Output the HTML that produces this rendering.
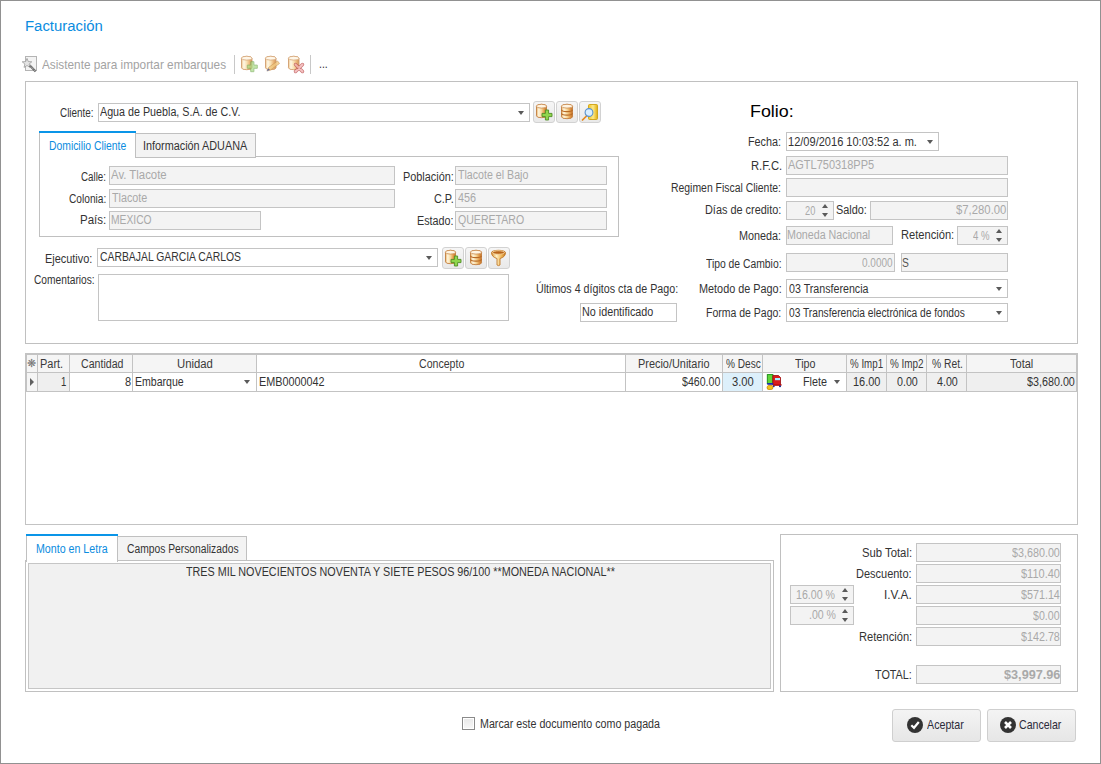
<!DOCTYPE html><html><head><meta charset='utf-8'><style>
*{margin:0;padding:0;box-sizing:border-box}
html,body{width:1101px;height:764px;overflow:hidden;background:#fff}
body{position:relative;font-family:"Liberation Sans",sans-serif;color:#000}
.a{position:absolute}
.t{position:absolute;white-space:nowrap;font-family:"Liberation Sans",sans-serif}

</style></head><body>
<div class='a' style='left:0;top:0;width:1101px;height:764px;border:1px solid #919191'></div>
<div class='t' style='left:25.04px;transform-origin:0 0;top:18px;font-size:15.5px;line-height:15.5px;color:#0b8ce0;font-weight:normal;transform:scaleX(0.9620);'>Facturación</div>
<svg class='a' style='left:22px;top:56px;overflow:visible' width='16' height='16' viewBox='0 0 16 16'>
<rect x='3.5' y='0.5' width='11' height='14' fill='#f3f3f3' stroke='#b4b4b4'/>
<path d='M5,2.4 L6.3,5.6 L9.8,5.8 L7.1,8 L8,11.4 L5,9.5 L2,11.4 L2.9,8 L0.2,5.8 L3.7,5.6Z' fill='#e4e4e4' stroke='#9c9c9c' stroke-width='.8'/>
<path d='M7.6,9.2 L13.6,15.4' stroke='#6a6a6a' stroke-width='2.2'/>
<path d='M7.6,9.2 L13.6,15.4' stroke='#d8d8d8' stroke-width='1' stroke-dasharray='1 1.2'/></svg>
<div class='t' style='left:42.30px;transform-origin:0 0;top:58px;font-size:13px;line-height:13px;color:#a3a3a3;font-weight:normal;transform:scaleX(0.9064);'>Asistente para importar embarques</div>
<div class='a' style='left:234px;top:55px;width:1px;height:19px;background:#c8c8c8;'></div>
<svg class='a' style='left:240px;top:55px;overflow:visible' width='20' height='20' viewBox='0 0 20 20'><defs><linearGradient id='c1' x1='0' x2='1'><stop offset='0' stop-color='#e9b46a'/><stop offset='.22' stop-color='#fff6de'/><stop offset='.5' stop-color='#f7d79a'/><stop offset='.78' stop-color='#e39a48'/><stop offset='1' stop-color='#c0722a'/></linearGradient></defs><g opacity='0.75'><path d='M1.5,3.1999999999999997 A5.25,1.9 0 0 1 12.0,3.1999999999999997 V12.799999999999999 A5.25,1.9 0 0 1 1.5,12.799999999999999 Z' fill='url(#c1)' stroke='#c27e40' stroke-width='.9'/><ellipse cx='6.75' cy='3.1999999999999997' rx='5.25' ry='1.9' fill='#fff5e2' stroke='#c88a50' stroke-width='.8'/></g><path opacity='0.7' d='M10.700000000000001,6.699999999999999 h3.2 v3.4 h3.4 v3.2 h-3.4 v3.4 h-3.2 v-3.4 h-3.4 v-3.2 h3.4 z' fill='#a9dc86' stroke='#79ad5a' stroke-width='.9'/></svg>
<svg class='a' style='left:263px;top:55px;overflow:visible' width='20' height='20' viewBox='0 0 20 20'><defs><linearGradient id='c2' x1='0' x2='1'><stop offset='0' stop-color='#e9b46a'/><stop offset='.22' stop-color='#fff6de'/><stop offset='.5' stop-color='#f7d79a'/><stop offset='.78' stop-color='#e39a48'/><stop offset='1' stop-color='#c0722a'/></linearGradient></defs><g opacity='0.75'><path d='M2.5,3.1999999999999997 A5.25,1.9 0 0 1 13.0,3.1999999999999997 V12.799999999999999 A5.25,1.9 0 0 1 2.5,12.799999999999999 Z' fill='url(#c2)' stroke='#c27e40' stroke-width='.9'/><ellipse cx='7.75' cy='3.1999999999999997' rx='5.25' ry='1.9' fill='#fff5e2' stroke='#c88a50' stroke-width='.8'/></g><g opacity='.8'><path d='M4,16 L5.5,12.5 L14.5,6 L16.5,8.5 L7.5,15 Z' fill='#f2c981' stroke='#cc9955' stroke-width='.8'/><path d='M3.6,16.3 L5.3,13.2 L7,15 Z' fill='#4a5a9a'/></g></svg>
<svg class='a' style='left:287px;top:55px;overflow:visible' width='20' height='20' viewBox='0 0 20 20'><defs><linearGradient id='c3' x1='0' x2='1'><stop offset='0' stop-color='#e9b46a'/><stop offset='.22' stop-color='#fff6de'/><stop offset='.5' stop-color='#f7d79a'/><stop offset='.78' stop-color='#e39a48'/><stop offset='1' stop-color='#c0722a'/></linearGradient></defs><g opacity='0.75'><path d='M1.5,3.1999999999999997 A5.25,1.9 0 0 1 12.0,3.1999999999999997 V12.799999999999999 A5.25,1.9 0 0 1 1.5,12.799999999999999 Z' fill='url(#c3)' stroke='#c27e40' stroke-width='.9'/><ellipse cx='6.75' cy='3.1999999999999997' rx='5.25' ry='1.9' fill='#fff5e2' stroke='#c88a50' stroke-width='.8'/></g><g opacity='.8'><path d='M8.5,9.5 L15.5,16.5 M15.5,9.5 L8.5,16.5' stroke='#c05a5a' stroke-width='3.4' stroke-linecap='round'/><path d='M8.5,9.5 L15.5,16.5 M15.5,9.5 L8.5,16.5' stroke='#f3b5b5' stroke-width='1.8' stroke-linecap='round'/></g></svg>
<div class='a' style='left:310px;top:55px;width:1px;height:19px;background:#c8c8c8;'></div>
<div class='t' style='left:319.12px;transform-origin:0 0;top:58px;font-size:12px;line-height:12px;color:#333;font-weight:normal;transform:scaleX(0.8750);'>...</div>
<div class='a' style='left:25px;top:81px;width:1053px;height:263px;border:1px solid #c0c0c0;background:transparent;'></div>
<div class='t' style='left:60.00px;transform-origin:0 0;top:107px;font-size:12px;line-height:12px;color:#333;font-weight:normal;transform:scaleX(0.8250);'>Cliente:</div>
<div class='a' style='left:98px;top:103px;width:432px;height:19px;border:1px solid #c4c4c4;background:#fff;'></div>
<div class='t' style='left:100.00px;transform-origin:0 0;top:106px;font-size:12px;line-height:12px;color:#333;font-weight:normal;transform:scaleX(0.8942);'>Agua de Puebla, S.A. de C.V.</div>
<div class='a' style='left:518px;top:111px;width:0;height:0;border-left:3.5px solid transparent;border-right:3.5px solid transparent;border-top:4px solid #5a5a5a'></div>
<div class='a' style='left:533px;top:101px;width:22px;height:22px;border:1px solid #d2d2d2;border-radius:3px;background:linear-gradient(#f6f6f6,#e9e9e9)'></div>
<div class='a' style='left:556px;top:101px;width:22px;height:22px;border:1px solid #d2d2d2;border-radius:3px;background:linear-gradient(#f6f6f6,#e9e9e9)'></div>
<div class='a' style='left:579px;top:101px;width:22px;height:22px;border:1px solid #d2d2d2;border-radius:3px;background:linear-gradient(#f6f6f6,#e9e9e9)'></div>
<svg class='a' style='left:533px;top:101px;overflow:visible' width='22' height='22' viewBox='0 0 22 22'><defs><linearGradient id='c4' x1='0' x2='1'><stop offset='0' stop-color='#e9b46a'/><stop offset='.22' stop-color='#fff6de'/><stop offset='.5' stop-color='#f7d79a'/><stop offset='.78' stop-color='#e39a48'/><stop offset='1' stop-color='#c0722a'/></linearGradient></defs><g opacity='1.0'><path d='M3.5,5.2 A5.0,1.9 0 0 1 13.5,5.2 V14.799999999999999 A5.0,1.9 0 0 1 3.5,14.799999999999999 Z' fill='url(#c4)' stroke='#c27e40' stroke-width='.9'/><ellipse cx='8.5' cy='5.2' rx='5.0' ry='1.9' fill='#fff5e2' stroke='#c88a50' stroke-width='.8'/></g><path opacity='1.0' d='M12.4,9 h3.2 v3.4 h3.4 v3.2 h-3.4 v3.4 h-3.2 v-3.4 h-3.4 v-3.2 h3.4 z' fill='#8fd64c' stroke='#4f8d25' stroke-width='.9'/></svg>
<svg class='a' style='left:556px;top:101px;overflow:visible' width='22' height='22' viewBox='0 0 22 22'><defs><linearGradient id='c5' x1='0' x2='1'><stop offset='0' stop-color='#e9b46a'/><stop offset='.22' stop-color='#fff6de'/><stop offset='.5' stop-color='#f7d79a'/><stop offset='.78' stop-color='#e39a48'/><stop offset='1' stop-color='#c0722a'/></linearGradient></defs><g opacity='1.0'><path d='M5.5,5.2 A5.5,1.9 0 0 1 16.5,5.2 V15.8 A5.5,1.9 0 0 1 5.5,15.8 Z' fill='url(#c5)' stroke='#c27e40' stroke-width='.9'/><path d='M5.5,8.733333333333334 A5.5,1.9 0 0 0 16.5,8.733333333333334' fill='none' stroke='#b86a26' stroke-width='1.1'/><path d='M5.5,12.266666666666667 A5.5,1.9 0 0 0 16.5,12.266666666666667' fill='none' stroke='#b86a26' stroke-width='1.1'/><ellipse cx='11.0' cy='5.2' rx='5.5' ry='1.9' fill='#fff5e2' stroke='#c88a50' stroke-width='.8'/></g></svg>
<svg class='a' style='left:579px;top:101px;overflow:visible' width='22' height='22' viewBox='0 0 22 22'><defs><linearGradient id='yd' x1='0' x2='1'><stop offset='0' stop-color='#f1c21e'/><stop offset='.5' stop-color='#fde98a'/><stop offset='1' stop-color='#e0ae10'/></linearGradient></defs><rect x='9.5' y='3.5' width='9' height='15' rx='1' fill='url(#yd)' stroke='#cfa010' stroke-width='.9'/><path d='M8 14.5 L3.5 19' stroke='#e58a1e' stroke-width='1.7' stroke-linecap='round'/><circle cx='10' cy='11.5' r='3.9' fill='#d8eeff' stroke='#5a92cc' stroke-width='1.1'/></svg>
<div class='a' style='left:39px;top:156px;width:580px;height:81px;border:1px solid #c0c0c0;background:#fff;'></div>
<div class='a' style='left:39px;top:131px;width:97px;height:27px;background:#fff;border-left:1px solid #c0c0c0;border-right:1px solid #c0c0c0'></div>
<div class='a' style='left:39px;top:131px;width:97px;height:2px;background:#0a95e8;'></div>
<div class='a' style='left:135px;top:133px;width:121px;height:25px;border:1px solid #c0c0c0;background:#f3f3f3;'></div>
<div class='a' style='left:40px;top:156px;width:95px;height:2px;background:#fff'></div>
<div class='t' style='left:49.14px;transform-origin:0 0;top:140px;font-size:12px;line-height:12px;color:#0b8ce0;font-weight:normal;transform:scaleX(0.8636);'>Domicilio Cliente</div>
<div class='t' style='left:143.10px;transform-origin:0 0;top:140px;font-size:12px;line-height:12px;color:#333;font-weight:normal;transform:scaleX(0.9035);'>Información ADUANA</div>
<div class='t' style='left:80.60px;transform-origin:0 0;top:171px;font-size:12px;line-height:12px;color:#333;font-weight:normal;transform:scaleX(0.8133);'>Calle:</div>
<div class='a' style='left:109px;top:166px;width:286px;height:19px;border:1px solid #c4c4c4;background:#f3f3f3;'></div>
<div class='t' style='left:111.00px;transform-origin:0 0;top:169px;font-size:12px;line-height:12px;color:#a9a9a9;font-weight:normal;transform:scaleX(0.9483);'>Av. Tlacote</div>
<div class='t' style='left:68.60px;transform-origin:0 0;top:193px;font-size:12px;line-height:12px;color:#333;font-weight:normal;transform:scaleX(0.8465);'>Colonia:</div>
<div class='a' style='left:109px;top:189px;width:286px;height:19px;border:1px solid #c4c4c4;background:#f3f3f3;'></div>
<div class='t' style='left:112.00px;transform-origin:0 0;top:192px;font-size:12px;line-height:12px;color:#a9a9a9;font-weight:normal;transform:scaleX(0.8974);'>Tlacote</div>
<div class='t' style='left:79.54px;transform-origin:0 0;top:214px;font-size:12px;line-height:12px;color:#333;font-weight:normal;transform:scaleX(0.9600);'>País:</div>
<div class='a' style='left:109px;top:211px;width:152px;height:19px;border:1px solid #c4c4c4;background:#f3f3f3;'></div>
<div class='t' style='left:111.14px;transform-origin:0 0;top:214px;font-size:12px;line-height:12px;color:#a9a9a9;font-weight:normal;transform:scaleX(0.8565);'>MEXICO</div>
<div class='t' style='left:403.09px;transform-origin:0 0;top:171px;font-size:12px;line-height:12px;color:#333;font-weight:normal;transform:scaleX(0.9074);'>Población:</div>
<div class='a' style='left:455px;top:166px;width:152px;height:19px;border:1px solid #c4c4c4;background:#f3f3f3;'></div>
<div class='t' style='left:458.00px;transform-origin:0 0;top:169px;font-size:12px;line-height:12px;color:#a9a9a9;font-weight:normal;transform:scaleX(0.8861);'>Tlacote el Bajo</div>
<div class='t' style='left:434.00px;transform-origin:0 0;top:193px;font-size:12px;line-height:12px;color:#333;font-weight:normal;transform:scaleX(0.9048);'>C.P.</div>
<div class='a' style='left:455px;top:189px;width:152px;height:19px;border:1px solid #c4c4c4;background:#f3f3f3;'></div>
<div class='t' style='left:458.00px;transform-origin:0 0;top:192px;font-size:12px;line-height:12px;color:#a9a9a9;font-weight:normal;transform:scaleX(0.9000);'>456</div>
<div class='t' style='left:417.10px;transform-origin:0 0;top:215px;font-size:12px;line-height:12px;color:#333;font-weight:normal;transform:scaleX(0.8974);'>Estado:</div>
<div class='a' style='left:455px;top:211px;width:152px;height:19px;border:1px solid #c4c4c4;background:#f3f3f3;'></div>
<div class='t' style='left:458.00px;transform-origin:0 0;top:214px;font-size:12px;line-height:12px;color:#a9a9a9;font-weight:normal;transform:scaleX(0.8800);'>QUERETARO</div>
<div class='t' style='left:44.89px;transform-origin:0 0;top:253px;font-size:12px;line-height:12px;color:#333;font-weight:normal;transform:scaleX(0.9100);'>Ejecutivo:</div>
<div class='a' style='left:97px;top:248px;width:341px;height:19px;border:1px solid #c4c4c4;background:#fff;'></div>
<div class='t' style='left:100.00px;transform-origin:0 0;top:251px;font-size:12px;line-height:12px;color:#333;font-weight:normal;transform:scaleX(0.8650);'>CARBAJAL GARCIA CARLOS</div>
<div class='a' style='left:426px;top:256px;width:0;height:0;border-left:3.5px solid transparent;border-right:3.5px solid transparent;border-top:4px solid #5a5a5a'></div>
<div class='a' style='left:442px;top:247px;width:22px;height:22px;border:1px solid #d2d2d2;border-radius:3px;background:linear-gradient(#f6f6f6,#e9e9e9)'></div>
<div class='a' style='left:465px;top:247px;width:22px;height:22px;border:1px solid #d2d2d2;border-radius:3px;background:linear-gradient(#f6f6f6,#e9e9e9)'></div>
<div class='a' style='left:488px;top:247px;width:22px;height:22px;border:1px solid #d2d2d2;border-radius:3px;background:linear-gradient(#f6f6f6,#e9e9e9)'></div>
<svg class='a' style='left:442px;top:247px;overflow:visible' width='22' height='22' viewBox='0 0 22 22'><defs><linearGradient id='c6' x1='0' x2='1'><stop offset='0' stop-color='#e9b46a'/><stop offset='.22' stop-color='#fff6de'/><stop offset='.5' stop-color='#f7d79a'/><stop offset='.78' stop-color='#e39a48'/><stop offset='1' stop-color='#c0722a'/></linearGradient></defs><g opacity='1.0'><path d='M3.5,5.2 A5.0,1.9 0 0 1 13.5,5.2 V14.799999999999999 A5.0,1.9 0 0 1 3.5,14.799999999999999 Z' fill='url(#c6)' stroke='#c27e40' stroke-width='.9'/><ellipse cx='8.5' cy='5.2' rx='5.0' ry='1.9' fill='#fff5e2' stroke='#c88a50' stroke-width='.8'/></g><path opacity='1.0' d='M12.4,9 h3.2 v3.4 h3.4 v3.2 h-3.4 v3.4 h-3.2 v-3.4 h-3.4 v-3.2 h3.4 z' fill='#8fd64c' stroke='#4f8d25' stroke-width='.9'/></svg>
<svg class='a' style='left:465px;top:247px;overflow:visible' width='22' height='22' viewBox='0 0 22 22'><defs><linearGradient id='c7' x1='0' x2='1'><stop offset='0' stop-color='#e9b46a'/><stop offset='.22' stop-color='#fff6de'/><stop offset='.5' stop-color='#f7d79a'/><stop offset='.78' stop-color='#e39a48'/><stop offset='1' stop-color='#c0722a'/></linearGradient></defs><g opacity='1.0'><path d='M5.5,5.2 A5.5,1.9 0 0 1 16.5,5.2 V15.8 A5.5,1.9 0 0 1 5.5,15.8 Z' fill='url(#c7)' stroke='#c27e40' stroke-width='.9'/><path d='M5.5,8.733333333333334 A5.5,1.9 0 0 0 16.5,8.733333333333334' fill='none' stroke='#b86a26' stroke-width='1.1'/><path d='M5.5,12.266666666666667 A5.5,1.9 0 0 0 16.5,12.266666666666667' fill='none' stroke='#b86a26' stroke-width='1.1'/><ellipse cx='11.0' cy='5.2' rx='5.5' ry='1.9' fill='#fff5e2' stroke='#c88a50' stroke-width='.8'/></g></svg>
<svg class='a' style='left:488px;top:247px;overflow:visible' width='22' height='22' viewBox='0 0 22 22'><defs><linearGradient id='fn' x1='0' x2='1'><stop offset='0' stop-color='#d9902e'/><stop offset='.35' stop-color='#fff2c8'/><stop offset='.7' stop-color='#f0b85a'/><stop offset='1' stop-color='#c47420'/></linearGradient></defs><path d='M3.5,5.5 A7,2.2 0 0 1 17.5,5.5 Q17.5,10 12,11.5 V18 Q10.5,19.2 9,18 V11.5 Q3.5,10 3.5,5.5 Z' fill='url(#fn)' stroke='#c0782a' stroke-width='.9'/><ellipse cx='10.5' cy='5.5' rx='6' ry='1.7' fill='#b8641a' stroke='#ffe6b8' stroke-width='.7'/></svg>
<div class='t' style='left:33.50px;transform-origin:0 0;top:274px;font-size:12px;line-height:12px;color:#333;font-weight:normal;transform:scaleX(0.8500);'>Comentarios:</div>
<div class='a' style='left:98px;top:274px;width:411px;height:47px;border:1px solid #c4c4c4;background:#fff;'></div>
<div class='t' style='left:536.11px;transform-origin:0 0;top:283px;font-size:12px;line-height:12px;color:#333;font-weight:normal;transform:scaleX(0.8917);'>Últimos 4 dígitos cta de Pago:</div>
<div class='a' style='left:580px;top:303px;width:97px;height:19px;border:1px solid #c4c4c4;background:#fff;'></div>
<div class='t' style='left:581.60px;transform-origin:0 0;top:306px;font-size:12px;line-height:12px;color:#333;font-weight:normal;transform:scaleX(0.8974);'>No identificado</div>
<div class='t' style='left:749.95px;transform-origin:0 0;top:103px;font-size:17px;line-height:17px;color:#000;font-weight:normal;transform:scaleX(1.0513);'>Folio:</div>
<div class='t' style='left:748.10px;transform-origin:0 0;top:135.5px;font-size:12px;line-height:12px;color:#333;font-weight:normal;transform:scaleX(0.9000);'>Fecha:</div>
<div class='a' style='left:786px;top:132px;width:153px;height:19px;border:1px solid #c4c4c4;background:#fff;'></div>
<div class='t' style='left:788.08px;transform-origin:0 0;top:136px;font-size:12px;line-height:12px;color:#333;font-weight:normal;transform:scaleX(0.9203);'>12/09/2016 10:03:52 a. m.</div>
<div class='a' style='left:927px;top:140px;width:0;height:0;border-left:3.5px solid transparent;border-right:3.5px solid transparent;border-top:4px solid #5a5a5a'></div>
<div class='t' style='left:750.56px;transform-origin:0 0;top:160px;font-size:12px;line-height:12px;color:#333;font-weight:normal;transform:scaleX(0.9355);'>R.F.C.</div>
<div class='a' style='left:786px;top:156px;width:222px;height:19px;border:1px solid #c4c4c4;background:#f3f3f3;'></div>
<div class='t' style='left:788.00px;transform-origin:0 0;top:159px;font-size:12px;line-height:12px;color:#a9a9a9;font-weight:normal;transform:scaleX(0.9149);'>AGTL750318PP5</div>
<div class='t' style='left:671.13px;transform-origin:0 0;top:182px;font-size:12px;line-height:12px;color:#333;font-weight:normal;transform:scaleX(0.8680);'>Regimen Fiscal Cliente:</div>
<div class='a' style='left:786px;top:178px;width:222px;height:19px;border:1px solid #c4c4c4;background:#f3f3f3;'></div>
<div class='t' style='left:705.09px;transform-origin:0 0;top:204px;font-size:12px;line-height:12px;color:#333;font-weight:normal;transform:scaleX(0.9085);'>Días de credito:</div>
<div class='a' style='left:786px;top:201px;width:48px;height:19px;border:1px solid #c4c4c4;background:#f3f3f3;'></div>
<div class='t' style='left:805.00px;transform-origin:0 0;top:205px;font-size:12px;line-height:12px;color:#a9a9a9;font-weight:normal;transform:scaleX(0.7692);'>20</div>
<div class='a' style='left:822px;top:204px;width:0;height:0;border-left:3.5px solid transparent;border-right:3.5px solid transparent;border-bottom:4px solid #5a5a5a'></div>
<div class='a' style='left:822px;top:213px;width:0;height:0;border-left:3.5px solid transparent;border-right:3.5px solid transparent;border-top:4px solid #5a5a5a'></div>
<div class='t' style='left:836.09px;transform-origin:0 0;top:204px;font-size:12px;line-height:12px;color:#333;font-weight:normal;transform:scaleX(0.9062);'>Saldo:</div>
<div class='a' style='left:870px;top:201px;width:138px;height:19px;border:1px solid #c4c4c4;background:#f3f3f3;'></div>
<div class='t' style='left:956.00px;transform-origin:0 0;top:204px;font-size:12px;line-height:12px;color:#a9a9a9;font-weight:normal;transform:scaleX(0.9434);'>$7,280.00</div>
<div class='t' style='left:739.10px;transform-origin:0 0;top:230px;font-size:12px;line-height:12px;color:#333;font-weight:normal;transform:scaleX(0.9000);'>Moneda:</div>
<div class='a' style='left:786px;top:226px;width:107px;height:19px;border:1px solid #c4c4c4;background:#f3f3f3;'></div>
<div class='t' style='left:787.11px;transform-origin:0 0;top:229px;font-size:12px;line-height:12px;color:#a9a9a9;font-weight:normal;transform:scaleX(0.8913);'>Moneda Nacional</div>
<div class='t' style='left:900.57px;transform-origin:0 0;top:229px;font-size:12px;line-height:12px;color:#333;font-weight:normal;transform:scaleX(0.9273);'>Retención:</div>
<div class='a' style='left:957px;top:226px;width:51px;height:19px;border:1px solid #c4c4c4;background:#f3f3f3;'></div>
<div class='t' style='left:973.00px;transform-origin:0 0;top:230px;font-size:12px;line-height:12px;color:#a9a9a9;font-weight:normal;transform:scaleX(0.8000);'>4 %</div>
<div class='a' style='left:996px;top:229px;width:0;height:0;border-left:3.5px solid transparent;border-right:3.5px solid transparent;border-bottom:4px solid #5a5a5a'></div>
<div class='a' style='left:996px;top:238px;width:0;height:0;border-left:3.5px solid transparent;border-right:3.5px solid transparent;border-top:4px solid #5a5a5a'></div>
<div class='t' style='left:705.50px;transform-origin:0 0;top:258px;font-size:12px;line-height:12px;color:#333;font-weight:normal;transform:scaleX(0.8621);'>Tipo de Cambio:</div>
<div class='a' style='left:786px;top:253px;width:109px;height:19px;border:1px solid #c4c4c4;background:#f3f3f3;'></div>
<div class='t' style='left:862.00px;transform-origin:0 0;top:257px;font-size:12px;line-height:12px;color:#a9a9a9;font-weight:normal;transform:scaleX(0.8333);'>0.0000</div>
<div class='a' style='left:901px;top:253px;width:107px;height:19px;border:1px solid #c4c4c4;background:#f3f3f3;'></div>
<div class='t' style='left:902.14px;transform-origin:0 0;top:257px;font-size:12px;line-height:12px;color:#555;font-weight:normal;transform:scaleX(0.8571);'>S</div>
<div class='t' style='left:699.10px;transform-origin:0 0;top:283px;font-size:12px;line-height:12px;color:#333;font-weight:normal;transform:scaleX(0.9045);'>Metodo de Pago:</div>
<div class='a' style='left:786px;top:279px;width:222px;height:19px;border:1px solid #c4c4c4;background:#fff;'></div>
<div class='t' style='left:789.00px;transform-origin:0 0;top:283px;font-size:12px;line-height:12px;color:#333;font-weight:normal;transform:scaleX(0.8889);'>03 Transferencia</div>
<div class='a' style='left:996px;top:287px;width:0;height:0;border-left:3.5px solid transparent;border-right:3.5px solid transparent;border-top:4px solid #5a5a5a'></div>
<div class='t' style='left:706.12px;transform-origin:0 0;top:307px;font-size:12px;line-height:12px;color:#333;font-weight:normal;transform:scaleX(0.8750);'>Forma de Pago:</div>
<div class='a' style='left:786px;top:303px;width:222px;height:19px;border:1px solid #c4c4c4;background:#fff;'></div>
<div class='t' style='left:789.00px;transform-origin:0 0;top:307px;font-size:12px;line-height:12px;color:#333;font-weight:normal;transform:scaleX(0.8502);'>03 Transferencia electrónica de fondos</div>
<div class='a' style='left:996px;top:311px;width:0;height:0;border-left:3.5px solid transparent;border-right:3.5px solid transparent;border-top:4px solid #5a5a5a'></div>
<div class='a' style='left:25px;top:353px;width:1053px;height:172px;border:1px solid #c3c3c3;background:#fff;'></div>
<div class='a' style='left:26px;top:354px;width:1050px;height:18px;background:#f5f5f5;'></div>
<div class='a' style='left:257px;top:354px;width:368px;height:18px;background:#fff;'></div>
<div class='a' style='left:26px;top:373px;width:11px;height:18px;background:#f5f5f5;'></div>
<div class='a' style='left:38px;top:373px;width:31px;height:18px;background:#efefef;'></div>
<div class='a' style='left:723px;top:373px;width:39px;height:18px;background:#ddf0fb;'></div>
<div class='a' style='left:847px;top:373px;width:229px;height:18px;background:#efefef;'></div>
<div class='a' style='left:26px;top:354px;width:1050px;height:1px;background:#c3c3c3;'></div>
<div class='a' style='left:26px;top:372px;width:1050px;height:1px;background:#c3c3c3;'></div>
<div class='a' style='left:26px;top:391px;width:1051px;height:1px;background:#c3c3c3;'></div>
<div class='a' style='left:26px;top:354px;width:1px;height:37px;background:#c3c3c3;'></div>
<div class='a' style='left:1076px;top:354px;width:1px;height:37px;background:#c3c3c3;'></div>
<div class='a' style='left:37px;top:354px;width:1px;height:37px;background:#c3c3c3;'></div>
<div class='a' style='left:69px;top:354px;width:1px;height:37px;background:#c3c3c3;'></div>
<div class='a' style='left:132px;top:354px;width:1px;height:37px;background:#c3c3c3;'></div>
<div class='a' style='left:256px;top:354px;width:1px;height:37px;background:#c3c3c3;'></div>
<div class='a' style='left:625px;top:354px;width:1px;height:37px;background:#c3c3c3;'></div>
<div class='a' style='left:722px;top:354px;width:1px;height:37px;background:#c3c3c3;'></div>
<div class='a' style='left:762px;top:354px;width:1px;height:37px;background:#c3c3c3;'></div>
<div class='a' style='left:846px;top:354px;width:1px;height:37px;background:#c3c3c3;'></div>
<div class='a' style='left:886px;top:354px;width:1px;height:37px;background:#c3c3c3;'></div>
<div class='a' style='left:926px;top:354px;width:1px;height:37px;background:#c3c3c3;'></div>
<div class='a' style='left:966px;top:354px;width:1px;height:37px;background:#c3c3c3;'></div>
<div class='t' style='left:27px;top:356px;font-size:11px;line-height:14px;color:#777'>&#10059;</div>
<div class='t' style='left:39.59px;transform-origin:0 0;top:358px;font-size:12px;line-height:12px;color:#3a3a3a;font-weight:normal;transform:scaleX(0.9130);'>Part.</div>
<div class='t' style='left:81.00px;transform-origin:0 0;top:358px;font-size:12px;line-height:12px;color:#3a3a3a;font-weight:normal;transform:scaleX(0.8830);'>Cantidad</div>
<div class='t' style='left:176.56px;transform-origin:0 0;top:358px;font-size:12px;line-height:12px;color:#3a3a3a;font-weight:normal;transform:scaleX(0.9444);'>Unidad</div>
<div class='t' style='left:419.00px;transform-origin:0 0;top:358px;font-size:12px;line-height:12px;color:#3a3a3a;font-weight:normal;transform:scaleX(0.8824);'>Concepto</div>
<div class='t' style='left:638.09px;transform-origin:0 0;top:358px;font-size:12px;line-height:12px;color:#3a3a3a;font-weight:normal;transform:scaleX(0.9091);'>Precio/Unitario</div>
<div class='t' style='left:726.00px;transform-origin:0 0;top:358px;font-size:12px;line-height:12px;color:#3a3a3a;font-weight:normal;transform:scaleX(0.8415);'>% Desc</div>
<div class='t' style='left:795.00px;transform-origin:0 0;top:358px;font-size:12px;line-height:12px;color:#3a3a3a;font-weight:normal;transform:scaleX(0.8913);'>Tipo</div>
<div class='t' style='left:850.00px;transform-origin:0 0;top:358px;font-size:12px;line-height:12px;color:#3a3a3a;font-weight:normal;transform:scaleX(0.8125);'>% Imp1</div>
<div class='t' style='left:890.00px;transform-origin:0 0;top:358px;font-size:12px;line-height:12px;color:#3a3a3a;font-weight:normal;transform:scaleX(0.8250);'>% Imp2</div>
<div class='t' style='left:931.50px;transform-origin:0 0;top:358px;font-size:12px;line-height:12px;color:#3a3a3a;font-weight:normal;transform:scaleX(0.8571);'>% Ret.</div>
<div class='t' style='left:1010.00px;transform-origin:0 0;top:358px;font-size:12px;line-height:12px;color:#3a3a3a;font-weight:normal;transform:scaleX(0.9200);'>Total</div>
<div class='a' style='left:30px;top:378px;width:0;height:0;border-top:4px solid transparent;border-bottom:4px solid transparent;border-left:4px solid #606060'></div>
<div class='t' style='left:60.70px;transform-origin:0 0;top:376px;font-size:12px;line-height:12px;color:#333;font-weight:normal;transform:scaleX(0.8000);'>1</div>
<div class='t' style='left:124.50px;transform-origin:0 0;top:376px;font-size:12px;line-height:12px;color:#333;font-weight:normal;transform:scaleX(0.9167);'>8</div>
<div class='t' style='left:134.62px;transform-origin:0 0;top:376px;font-size:12px;line-height:12px;color:#333;font-weight:normal;transform:scaleX(0.8796);'>Embarque</div>
<div class='a' style='left:244px;top:380px;width:0;height:0;border-left:3.5px solid transparent;border-right:3.5px solid transparent;border-top:4px solid #5a5a5a'></div>
<div class='t' style='left:259.10px;transform-origin:0 0;top:376px;font-size:12px;line-height:12px;color:#333;font-weight:normal;transform:scaleX(0.9014);'>EMB0000042</div>
<div class='t' style='left:682.00px;transform-origin:0 0;top:376px;font-size:12px;line-height:12px;color:#333;font-weight:normal;transform:scaleX(0.8837);'>$460.00</div>
<div class='t' style='left:732.07px;transform-origin:0 0;top:376px;font-size:12px;line-height:12px;color:#333;font-weight:normal;transform:scaleX(0.9318);'>3.00</div>
<svg class='a' style='left:763px;top:372px;overflow:visible' width='24' height='20' viewBox='0 0 24 20'><rect x='4.3' y='2.6' width='5.6' height='9' fill='#5fd53a' stroke='#138a13' stroke-width='.9'/><path d='M9.8,3.5 H15.5 L17.5,5.5 V13.2 H9.8 Z' fill='#d91c1c' stroke='#9a0c0c' stroke-width='.8'/><rect x='12' y='6' width='5' height='2.2' fill='#a8ecff'/><rect x='4.3' y='11' width='6' height='1.8' fill='#1a2ab0'/><rect x='10' y='12.2' width='8.6' height='1.4' fill='#c01010'/><circle cx='10.8' cy='14.3' r='.9' fill='#10208a'/><circle cx='17' cy='14.3' r='1' fill='#10208a'/><path d='M4,15 Q5,12.5 7,13.5 Q9.5,12.5 10,15 Q10.5,17.8 7,17.6 Q3.5,18 4,15 Z' fill='#f2c31a' stroke='#c98a10' stroke-width='.8'/></svg>
<div class='t' style='left:803.10px;transform-origin:0 0;top:376px;font-size:12px;line-height:12px;color:#333;font-weight:normal;transform:scaleX(0.9000);'>Flete</div>
<div class='a' style='left:834px;top:380px;width:0;height:0;border-left:3.5px solid transparent;border-right:3.5px solid transparent;border-top:4px solid #5a5a5a'></div>
<div class='t' style='left:853.09px;transform-origin:0 0;top:376px;font-size:12px;line-height:12px;color:#333;font-weight:normal;transform:scaleX(0.9138);'>16.00</div>
<div class='t' style='left:897.00px;transform-origin:0 0;top:376px;font-size:12px;line-height:12px;color:#333;font-weight:normal;transform:scaleX(0.8913);'>0.00</div>
<div class='t' style='left:936.50px;transform-origin:0 0;top:376px;font-size:12px;line-height:12px;color:#333;font-weight:normal;transform:scaleX(0.8913);'>4.00</div>
<div class='t' style='left:1027.00px;transform-origin:0 0;top:376px;font-size:12px;line-height:12px;color:#333;font-weight:normal;transform:scaleX(0.8962);'>$3,680.00</div>
<div class='a' style='left:25px;top:560px;width:749px;height:132px;border:1px solid #c0c0c0;background:#fff;'></div>
<div class='a' style='left:28px;top:563px;width:743px;height:126px;border:1px solid #c6c6c6;background:#f1f1f1;'></div>
<div class='a' style='left:26px;top:534px;width:92px;height:28px;background:#fff;border-left:1px solid #c0c0c0;border-right:1px solid #c0c0c0'></div>
<div class='a' style='left:26px;top:534px;width:92px;height:2px;background:#0a95e8;'></div>
<div class='a' style='left:117px;top:536px;width:130px;height:25px;border:1px solid #c0c0c0;background:#f3f3f3;'></div>
<div class='a' style='left:27px;top:559px;width:90px;height:3px;background:#fff'></div>
<div class='t' style='left:36.11px;transform-origin:0 0;top:543px;font-size:12px;line-height:12px;color:#0b8ce0;font-weight:normal;transform:scaleX(0.8875);'>Monto en Letra</div>
<div class='t' style='left:126.50px;transform-origin:0 0;top:542.5px;font-size:12px;line-height:12px;color:#333;font-weight:normal;transform:scaleX(0.8577);'>Campos Personalizados</div>
<div class='t' style='left:186.00px;transform-origin:0 0;top:565.5px;font-size:12px;line-height:12px;color:#333;font-weight:normal;transform:scaleX(0.8983);'>TRES MIL NOVECIENTOS NOVENTA Y SIETE PESOS 96/100 **MONEDA NACIONAL**</div>
<div class='a' style='left:780px;top:534px;width:298px;height:158px;border:1px solid #c0c0c0;background:#fff;'></div>
<div class='t' style='left:861.56px;transform-origin:0 0;top:546.5px;font-size:12px;line-height:12px;color:#333;font-weight:normal;transform:scaleX(0.9412);'>Sub Total:</div>
<div class='a' style='left:916px;top:543px;width:145px;height:19px;border:1px solid #c4c4c4;background:#f3f3f3;'></div>
<div class='t' style='left:1012.00px;transform-origin:0 0;top:546.5px;font-size:12px;line-height:12px;color:#a9a9a9;font-weight:normal;transform:scaleX(0.8962);'>$3,680.00</div>
<div class='t' style='left:855.58px;transform-origin:0 0;top:567.5px;font-size:12px;line-height:12px;color:#333;font-weight:normal;transform:scaleX(0.9153);'>Descuento:</div>
<div class='a' style='left:916px;top:564px;width:145px;height:19px;border:1px solid #c4c4c4;background:#f3f3f3;'></div>
<div class='t' style='left:1021.00px;transform-origin:0 0;top:567.5px;font-size:12px;line-height:12px;color:#a9a9a9;font-weight:normal;transform:scaleX(0.9167);'>$110.40</div>
<div class='t' style='left:884.02px;transform-origin:0 0;top:588.5px;font-size:12px;line-height:12px;color:#333;font-weight:normal;transform:scaleX(0.9808);'>I.V.A.</div>
<div class='a' style='left:916px;top:585px;width:145px;height:19px;border:1px solid #c4c4c4;background:#f3f3f3;'></div>
<div class='t' style='left:1021.00px;transform-origin:0 0;top:588.5px;font-size:12px;line-height:12px;color:#a9a9a9;font-weight:normal;transform:scaleX(0.8953);'>$571.14</div>
<div class='a' style='left:916px;top:606px;width:145px;height:19px;border:1px solid #c4c4c4;background:#f3f3f3;'></div>
<div class='t' style='left:1033.00px;transform-origin:0 0;top:609.5px;font-size:12px;line-height:12px;color:#a9a9a9;font-weight:normal;transform:scaleX(0.8833);'>$0.00</div>
<div class='t' style='left:858.57px;transform-origin:0 0;top:630.5px;font-size:12px;line-height:12px;color:#333;font-weight:normal;transform:scaleX(0.9273);'>Retención:</div>
<div class='a' style='left:916px;top:627px;width:145px;height:19px;border:1px solid #c4c4c4;background:#f3f3f3;'></div>
<div class='t' style='left:1021.00px;transform-origin:0 0;top:630.5px;font-size:12px;line-height:12px;color:#a9a9a9;font-weight:normal;transform:scaleX(0.8953);'>$142.78</div>
<div class='t' style='left:874.50px;transform-origin:0 0;top:669px;font-size:12px;line-height:12px;color:#333;font-weight:normal;transform:scaleX(0.9000);'>TOTAL:</div>
<div class='a' style='left:916px;top:665px;width:145px;height:19px;border:1px solid #c4c4c4;background:#f3f3f3;'></div>
<div class='t' style='left:1003.50px;transform-origin:0 0;top:669px;font-size:12px;line-height:12px;color:#a9a9a9;font-weight:bold;transform:scaleX(1.0566);'>$3,997.96</div>
<div class='a' style='left:790px;top:585px;width:64px;height:19px;border:1px solid #c4c4c4;background:#f3f3f3;'></div>
<div class='t' style='left:796.12px;transform-origin:0 0;top:588.5px;font-size:12px;line-height:12px;color:#a9a9a9;font-weight:normal;transform:scaleX(0.8837);'>16.00 %</div>
<div class='a' style='left:842px;top:588px;width:0;height:0;border-left:3.5px solid transparent;border-right:3.5px solid transparent;border-bottom:4px solid #5a5a5a'></div>
<div class='a' style='left:842px;top:597px;width:0;height:0;border-left:3.5px solid transparent;border-right:3.5px solid transparent;border-top:4px solid #5a5a5a'></div>
<div class='a' style='left:790px;top:606px;width:64px;height:19px;border:1px solid #c4c4c4;background:#f3f3f3;'></div>
<div class='t' style='left:808.62px;transform-origin:0 0;top:609px;font-size:12px;line-height:12px;color:#a9a9a9;font-weight:normal;transform:scaleX(0.8793);'>.00 %</div>
<div class='a' style='left:842px;top:609px;width:0;height:0;border-left:3.5px solid transparent;border-right:3.5px solid transparent;border-bottom:4px solid #5a5a5a'></div>
<div class='a' style='left:842px;top:618px;width:0;height:0;border-left:3.5px solid transparent;border-right:3.5px solid transparent;border-top:4px solid #5a5a5a'></div>
<div class='a' style='left:462px;top:717px;width:13px;height:13px;border:1px solid #8a8a8a;background:linear-gradient(#e8e8e8,#f8f8f8);box-shadow:inset 0 0 0 1px #fff'></div>
<div class='t' style='left:479.61px;transform-origin:0 0;top:718px;font-size:12px;line-height:12px;color:#333;font-weight:normal;transform:scaleX(0.8905);'>Marcar este documento como pagada</div>
<div class='a' style='left:892px;top:709px;width:89px;height:33px;border:1px solid #cfcfcf;border-radius:3px;background:linear-gradient(#f4f4f4,#e6e6e6)'></div>
<svg class='a' style='left:907px;top:717px' width='16' height='16' viewBox='0 0 16 16'><circle cx='8' cy='8' r='8' fill='#333'/><path d='M4.3 8.2 L7 10.8 L11.8 5' fill='none' stroke='#fff' stroke-width='2.2'/></svg>
<div class='t' style='left:927.00px;transform-origin:0 0;top:718px;font-size:13px;line-height:13px;color:#2b2b3a;font-weight:normal;transform:scaleX(0.8222);'>Aceptar</div>
<div class='a' style='left:987px;top:709px;width:89px;height:33px;border:1px solid #cfcfcf;border-radius:3px;background:linear-gradient(#f4f4f4,#e6e6e6)'></div>
<svg class='a' style='left:1000px;top:717px' width='16' height='16' viewBox='0 0 16 16'><circle cx='8' cy='8' r='8' fill='#333'/><path d='M5 5 L11 11 M11 5 L5 11' fill='none' stroke='#fff' stroke-width='2.6'/></svg>
<div class='t' style='left:1018.69px;transform-origin:0 0;top:718px;font-size:13px;line-height:13px;color:#2b2b3a;font-weight:normal;transform:scaleX(0.8137);'>Cancelar</div>
</body></html>
